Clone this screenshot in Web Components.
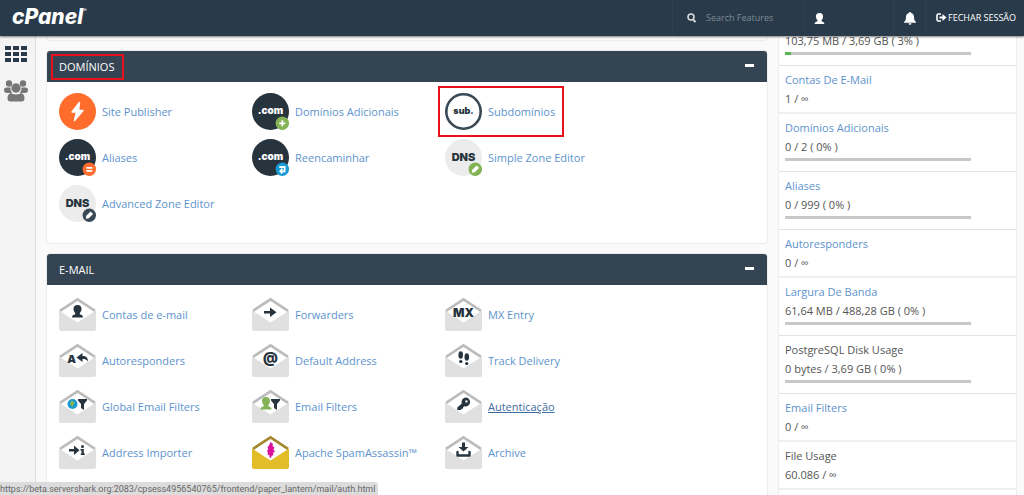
<!DOCTYPE html>
<html lang="pt">
<head>
<meta charset="utf-8">
<title>cPanel</title>
<style>
html, body { margin: 0; height: 100%; }
body { overflow: hidden; background: #fafafa; font: 11px/19px "Open Sans", "Noto Sans", sans-serif; color: #555; }
</style>
</head>
<body>
<cp-app></cp-app>
<script>
const define = (name, html, setup) => customElements.define(name, class extends HTMLElement {
  connectedCallback() {
    if (this.shadowRoot) return;
    const t = document.createElement('template');
    t.innerHTML = html;
    this.attachShadow({ mode: 'open' }).append(t.content.cloneNode(true));
    if (setup) setup(this, this.shadowRoot);
  }
});

/* Icon artwork, drawn on a 37 x 37 grid */
const PERSON = '<path d="M18.500 9c-2.800 0-4.200 1.800-4 4.200.1 1.600.8 2.800 1.700 3.700v1.300c-1.800.6-3.200 1.200-3.200 3.200h11c0-2-1.400-2.600-3.200-3.200v-1.300c.9-.9 1.600-2.100 1.700-3.700.2-2.400-1.200-4.200-4-4.200z"/>';
const FUNNEL = '<path d="M19 11h9v1.500l-3 3.500v6l-3-2v-4l-3-3.500z"/>';
const label = (text, fill, x = 18.5, y = 21, size = 11) =>
  `<text x="${x}" y="${y}" text-anchor="middle" font-family="Inter, sans-serif" font-weight="900" font-size="${size}" fill="${fill}">${text}</text>`;
const disc = fill => `<circle cx="18.500" cy="18.500" r="18.500" fill="${fill}"/>`;
const badge = (fill, mark) => `<circle cx="30.300" cy="30.300" r="6.700" fill="${fill}"/><g transform="translate(30.300 30.300)" stroke="#fff" fill="none" stroke-width="1.800">${mark}</g>`;
const com = disc('#27343e') + label('.com', '#fff', 18.5, 21, 10);
const dns = disc('#ececec') + label('DNS', '#27343e', 18.5, 22, 11);
const pencil = '<path d="M-3.500 3.500l.5-3 4.300-4.300 2.500 2.500-4.300 4.300z" fill="#fff" stroke="none"/>';
const mail = (mark, body = '#e0e0e0', flap = '#bcbcbc') =>
  `<path d="M0 14.500 18.500 26.500 37 14.500V33a2 2 0 0 1-2 2H2a2 2 0 0 1-2-2z" fill="${body}"/>
   <path d="M1.500 14.500 18.500 26 35.500 14.500 18.500 3.500z" fill="#fff"/>
   <path d="M1 14.800 18.500 3.300 36 14.800" fill="none" stroke="${flap}" stroke-width="2.600"/>
   <g fill="#27343e">${mark}</g>`;
const ICONS = {
  publisher: disc('#ff6c2c') + '<path d="M20.500 9.500 13 19h4.500l-2 8.500L24 17.500h-4.500z" fill="#fff" stroke="#fff" stroke-width="1.500" stroke-linejoin="round"/>',
  addon: com + badge('#83b354', '<path d="M-3 0h6M0-3v6"/>'),
  sub: '<circle cx="18.500" cy="18.500" r="17.200" fill="#fff" stroke="#3a4956" stroke-width="2.600"/>' + label('sub.', '#27343e', 18.5, 21, 9),
  alias: com + badge('#ff6c2c', '<path d="M-3-1.500h6M-3 1.500h6"/>'),
  redirect: com + badge('#179bd7', '<path d="M-3-2.300h5.300v4.300H-2M0-.500-2 2 0 4"/>'),
  zone: dns + badge('#83b354', pencil),
  zoneadv: dns + badge('#3a4956', pencil),
  account: mail(PERSON),
  forward: mail('<path d="M12 15h6v-3.500l6.500 4.800-6.500 4.700v-3.500h-6z"/>'),
  mx: mail(label('MX', '#27343e', 18.5, 20.5, 12)),
  auto: mail(label('A', '#27343e', 12.5, 20.5, 11) + '<path d="M17.500 15.500 23.500 11v3c4 0 5.500 2 5.500 5.500-1.500-2-3-2.500-5.500-2.500v3z"/>'),
  address: mail(label('@', '#27343e', 18.5, 20.5, 14)),
  track: mail('<ellipse cx="15.700" cy="13" rx="2.300" ry="3.700"/><ellipse cx="15.800" cy="19.500" rx="1.700" ry="1.600"/><ellipse cx="21.800" cy="15" rx="2.300" ry="3.700"/><ellipse cx="21.700" cy="21.500" rx="1.700" ry="1.600"/>'),
  global: mail('<circle cx="13.500" cy="16" r="5" fill="#179bd7"/><path d="M12 13h2l2 2-1.500 1.500-1 3-1.500-2-1-2z" fill="#83b354"/>' + FUNNEL),
  filter: mail('<g fill="#83b354" transform="translate(-4.500 0)">' + PERSON + '</g>' + FUNNEL),
  key: mail('<path fill-rule="evenodd" d="M20.500 9.500a4.500 4.500 0 1 1-1.200 8.800L18 19.500v1.300h-1.700V22h-4v-2.500l4.500-4a4.500 4.500 0 0 1 3.700-6zm1 2.700a1.200 1.200 0 1 0 0 2.400 1.200 1.200 0 0 0 0-2.400z"/>'),
  importer: mail('<path d="M10 15h5v-3.500l5.500 4.800-5.500 4.700v-3.500h-5z"/><circle cx="23.500" cy="12.500" r="1.500"/><path d="M21.500 15h3.300v4.500h1v1.500h-4v-1.500h.7v-3h-1z"/>'),
  spam: mail('<path d="M18.500 8l2.500 2-.5 2 2 1.500-1 2 1.500 2-2 1.500.5 2-2 1-.5 2-1.500-.5v-2l-2-1 .5-2-1-1.500 1.200-2-.7-2 1.500-1.500z" fill="#d9149b"/>', '#e3bd27', '#a58730'),
  archive: mail('<path d="M17 8.500h3V13h3.500l-5 4.500-5-4.500H17z"/><path d="M12.500 18v3.500h12V18" fill="none" stroke="#27343e" stroke-width="2.400" stroke-linejoin="round" stroke-linecap="round"/>')
};

define('cp-header', `<style>
:host { display: flex; flex: none; height: 36px; background: #293a4a; color: #fff; box-shadow: 0 1px 2px rgba(0,0,0,.5); position: relative; z-index: 2; font-size: 9px; line-height: 16px; }
.logo { margin-right: auto; padding: 5px 12px; color: #fff; text-decoration: none; font: italic 800 21px/24px Inter, sans-serif; display: flex; }
.logo small { font: 5px/10px Inter, sans-serif; }
.cell { display: flex; align-items: center; box-sizing: border-box; border-left: 1px solid #30404f; padding: 0; }
.search { width: 132px; padding-left: 14px; gap: 10px; }
input { flex: 1; min-width: 0; padding: 0; border: 0; background: none; color: #fff; font: inherit; outline: 0; }
input::placeholder { color: #7f8a94; opacity: 1; }
button { background: none; border-width: 0; color: #fff; font: inherit; }
.user { width: 89px; padding-left: 9px; }
.bell { width: 32px; justify-content: center; }
.out { width: 99px; padding-left: 10px; gap: 1px; color: #fff; text-decoration: none; white-space: nowrap; }
svg { flex: none; fill: currentColor; }
</style>
<a class="logo" href="#">cPanel<small>®</small></a>
<label class="cell search"><svg width="9" height="10" viewBox="0 0 9 10"><circle cx="4" cy="4" r="3" fill="none" stroke="#ddd" stroke-width="1.500"/><path d="M6 6.500 8.500 9" stroke="#ddd" stroke-width="1.800"/></svg><input type="text" placeholder="Search Features" aria-label="Search Features"></label>
<button class="cell user" aria-label="User"><svg width="11" height="11" viewBox="13 9 11 12.400">${PERSON}</svg></button>
<button class="cell bell" aria-label="Notifications"><svg width="12" height="13" viewBox="0 0 12 13"><path d="M6 0c.7 0 1 .4 1 1 2 .5 3 2 3 4 0 3 .8 4 2 5v.8H0V10c1.200-1 2-2 2-5 0-2 1-3.500 3-4 0-.6.300-1 1-1zM4.500 11.300h3a1.500 1.500 0 0 1-3 0z"/></svg></button>
<a class="cell out" href="#"><svg width="11" height="10" viewBox="0 0 11 10"><path d="M5 1H2.500A1.500 1.500 0 0 0 1 2.500v4A1.500 1.500 0 0 0 2.500 8H5" fill="none" stroke="#fff" stroke-width="1.600"/><path d="M3.500 3.500h3V1l4 3.500-4 3.500V5.500h-3z"/></svg>FECHAR SESSÃO</a>`);

define('cp-rail', `<style>
:host { display: flex; flex-direction: column; align-items: center; gap: 17px; box-sizing: border-box; width: 36px; padding-top: 9px; padding-right: 3px; background: #f4f4f4; border-right: 1px solid #dedede; }
a { display: block; height: 18px; } a + a { height: 22px; } svg { display: block; }
</style>
<a href="#" aria-label="Home"><svg width="22" height="18" fill="#293a4a"><path d="M0 1h6v4H0zM8 1h6v4H8zM16 1h6v4h-6zM0 7h6v4H0zM8 7h6v4H8zM16 7h6v4h-6zM0 13h6v4H0zM8 13h6v4H8zM16 13h6v4h-6z"/></svg></a>
<a href="#" aria-label="Users"><svg width="24" height="22" fill="#777"><circle cx="5" cy="3.500" r="3.200"/><circle cx="19" cy="3.500" r="3.200"/><path d="M2.500 7.500h4q-.5 3 1.500 5.500H3q-3 0-3-3 0-2.500 2.500-2.500zM21.500 7.500h-4q.5 3-1.500 5.500h5q3 0 3-3 0-2.500-2.500-2.500z"/><circle cx="12" cy="8" r="4.700"/><path d="M7 13q5 3 10 0 3.500 1 3.500 5 0 3.500-3 3.500h-11q-3 0-3-3.500 0-4 3.500-5z"/></svg></a>`);

define('cp-item', `<style>
:host { display: flex; align-items: center; height: 37px; }
a { display: flex; align-items: center; gap: 6px; color: #5d93cd; text-decoration: none; white-space: nowrap; }
:host([hover]) a span { color: #3d6c9f; text-decoration: underline; }
svg { flex: none; display: block; }
</style><a href="#"><svg width="37" height="37" viewBox="0 0 37 37" aria-hidden="true"></svg><span><slot></slot></span></a>`,
  (host, root) => { root.querySelector('svg').innerHTML = ICONS[host.getAttribute('icon')]; });

define('cp-panel', `<style>
:host { display: block; background: #fff; border-radius: 3px; box-shadow: 0 0 2px rgba(0,0,0,.2); }
header { display: flex; justify-content: space-between; align-items: center; height: 31px; padding: 0 12px; background: #354453; color: #fff; border-radius: 3px 3px 0 0; }
h2 { margin: 0; font: inherit; }
button { display: block; width: 10px; height: 10px; padding: 0; border: 0; background: linear-gradient(#fff, #fff) 0 2px / 9px 3px no-repeat; }
.grid { display: grid; grid-template-columns: repeat(auto-fill, 193px); row-gap: 9px; padding: 11px 12px 21px; }
</style><header><h2><slot name="title"></slot></h2><button aria-label="Collapse"></button></header><div class="grid"><slot></slot></div>`);

define('cp-stat', `<style>
:host { display: block; padding: 4px 6px; border-bottom: 2px solid #f0f0f0; }
:host([bar]) { padding-bottom: 10px; border-bottom: 1px solid #e2e2e2; }
a { color: #5d93cd; text-decoration: none; }
a, b { display: block; font-weight: 400; }
progress { display: block; appearance: none; width: 84%; max-width: 186px; height: 3px; margin-top: 2px; border: 0; background: #c8c8c8; }
progress::-webkit-progress-bar { background: #c8c8c8; }
progress::-webkit-progress-value { background: #53b94d; }
:host(:not([bar])) progress { display: none; }
</style><slot name="name"></slot><div><slot></slot></div><progress max="100" aria-label="Usage"></progress>`,
  (host, root) => {
    root.querySelector('progress').value = host.getAttribute('bar') || 0;
    const name = host.getAttribute('name');
    const el = document.createElement(host.hasAttribute('plain') ? 'b' : 'a');
    if (name) { el.textContent = name; if (el.localName === 'a') el.href = '#'; root.querySelector('slot[name]').replaceWith(el); }
  });

define('cp-status', `<style>
:host { position: fixed; left: 0; bottom: 0; z-index: 3; box-sizing: border-box; height: 13px; padding-right: 3px; background: #dcdcdc; color: #666; border-top-right-radius: 3px; font: 9px/14px Roboto, sans-serif; white-space: nowrap; }
</style><slot></slot>`);

define('cp-app', `<style>
:host { display: flex; flex-direction: column; height: 100vh; overflow: hidden; }
.body { display: flex; flex: 1; min-height: 0; }
main { flex: 1; min-width: 0; padding-left: 11px; }
.prev { height: 4px; margin-bottom: 11px; background: #fafafa; border-radius: 0 0 3px 3px; box-shadow: 0 0 2px rgba(0,0,0,.2); }
cp-panel { margin-bottom: 11px; position: relative; }
cp-panel.last { padding-bottom: 21px; }
.ring { position: absolute; border: 2px solid #e8101a; box-sizing: border-box; pointer-events: none; }
.title-ring { left: 4px; top: 3px; width: 73px; height: 26px; }
.sub-ring { left: 391px; top: 35px; width: 126px; height: 51px; }
.first { position: relative; }
aside { flex: none; width: 237px; margin: 0 7px 0 11px; background: #fff; border: solid #eee; border-width: 0 1px; }
.top { margin-top: -9px; }
</style>
<cp-header></cp-header>
<div class="body">
<cp-rail></cp-rail>
<main><div class="prev"></div>
<div class="first"><cp-panel><span slot="title">DOMÍNIOS</span>
<cp-item icon="publisher">Site Publisher</cp-item><cp-item icon="addon">Domínios Adicionais</cp-item><cp-item icon="sub">Subdomínios</cp-item>
<cp-item icon="alias">Aliases</cp-item><cp-item icon="redirect">Reencaminhar</cp-item><cp-item icon="zone">Simple Zone Editor</cp-item>
<cp-item icon="zoneadv">Advanced Zone Editor</cp-item></cp-panel><div class="ring title-ring"></div><div class="ring sub-ring"></div></div>
<cp-panel class="last"><span slot="title">E-MAIL</span>
<cp-item icon="account">Contas de e-mail</cp-item><cp-item icon="forward">Forwarders</cp-item><cp-item icon="mx">MX Entry</cp-item>
<cp-item icon="auto">Autoresponders</cp-item><cp-item icon="address">Default Address</cp-item><cp-item icon="track">Track Delivery</cp-item>
<cp-item icon="global">Global Email Filters</cp-item><cp-item icon="filter">Email Filters</cp-item><cp-item icon="key" hover>Autenticação</cp-item>
<cp-item icon="importer">Address Importer</cp-item><cp-item icon="spam">Apache SpamAssassin™</cp-item><cp-item icon="archive">Archive</cp-item></cp-panel></main>
<aside>
<cp-stat class="top" bar="3">103,75 MB / 3,69 GB ( 3% )</cp-stat>
<cp-stat name="Contas De E-Mail">1 / ∞</cp-stat>
<cp-stat name="Domínios Adicionais" bar="0">0 / 2 ( 0% )</cp-stat>
<cp-stat name="Aliases" bar="0">0 / 999 ( 0% )</cp-stat>
<cp-stat name="Autoresponders">0 / ∞</cp-stat>
<cp-stat name="Largura De Banda" bar="0">61,64 MB / 488,28 GB ( 0% )</cp-stat>
<cp-stat name="PostgreSQL Disk Usage" plain bar="0">0 bytes / 3,69 GB ( 0% )</cp-stat>
<cp-stat name="Email Filters">0 / ∞</cp-stat>
<cp-stat name="File Usage" plain>60.086 / ∞</cp-stat>
</aside>
</div>
<cp-status>https://beta.servershark.org:2083/cpsess4956540765/frontend/paper_lantern/mail/auth.html</cp-status>`);
</script>
</body>
</html>
